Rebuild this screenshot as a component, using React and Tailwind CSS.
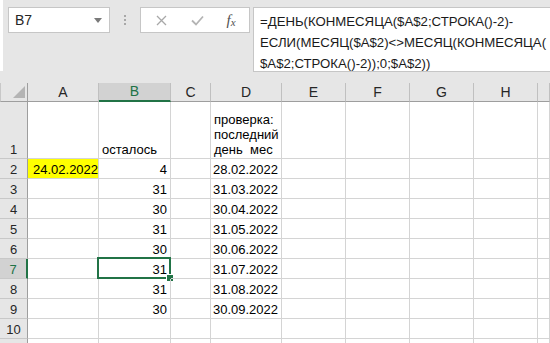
import React from "react";

const COLS = ["A", "B", "C", "D", "E", "F", "G", "H", ""];
const DATA = [
  { b: "4", d: "28.02.2022" },
  { b: "31", d: "31.03.2022" },
  { b: "30", d: "30.04.2022" },
  { b: "31", d: "31.05.2022" },
  { b: "30", d: "30.06.2022" },
  { b: "31", d: "31.07.2022" },
  { b: "31", d: "31.08.2022" },
  { b: "30", d: "30.09.2022" },
];

function Cell({ children, className = "" }) {
  return (
    <div className={`relative border-r border-b border-[#d4d4d4] flex items-end leading-[17px] ${className}`}>
      {children}
    </div>
  );
}

function RowHead({ n, selected, h = "h-[20px]" }) {
  return (
    <div
      className={`${h} flex items-end justify-center leading-[17px] border-b border-b-[#c8c8c8] ${
        selected
          ? "bg-[#d2d2d2] border-r-2 border-r-[#217346] text-[#217346]"
          : "bg-[#e6e6e6] border-r border-r-[#9e9e9e] text-[#262626]"
      }`}
    >
      {n}
    </div>
  );
}

function Row({ n, a, b, d, h = "h-[20px]", selected }) {
  return (
    <>
      <RowHead n={n} selected={selected} h={h} />
      <Cell className={`${h} px-[5px] ${a ? "bg-[#ffff00]" : ""}`}>{a}</Cell>
      <Cell className={`${h} justify-end pr-[3px]`}>
        {b}
        {selected && (
          <div className="absolute left-[-2px] top-[-2px] right-[-1px] bottom-[-1px] border-2 border-[#217346]">
            <div className="absolute right-[-4px] bottom-[-4px] w-[6px] h-[6px] bg-[#217346] outline outline-1 outline-white" />
          </div>
        )}
      </Cell>
      <Cell className={h} />
      <Cell className={`${h} justify-end pr-[3px]`}>{d}</Cell>
      <Cell className={h} />
      <Cell className={h} />
      <Cell className={h} />
      <Cell className={h} />
      <Cell className={h} />
    </>
  );
}

export default function App() {
  return (
    <div className="w-[550px] h-[343px] overflow-hidden bg-white font-['Liberation_Sans',Arial,sans-serif] text-[13px] text-black">
      {/* Formula bar */}
      <div className="h-[83px] bg-[#e6e6e6] flex items-start">
        <div className="w-[3px] h-[71px] bg-white" />
        <div className="ml-[5px] mt-[7px] w-[102px] h-[26px] bg-white border border-[#c6c6c6] flex items-center justify-between pl-[6px] pr-[7px] text-[14px] text-[#262626]">
          <span>B7</span>
          <svg width="8" height="5" viewBox="0 0 8 5">
            <path d="M0 0 L8 0 L4 5 Z" fill="#7a7a7a" />
          </svg>
        </div>
        <div className="w-[30px] h-[40px] flex flex-col items-center gap-[2px] pt-[15px]">
          <div className="w-[2px] h-[2px] bg-[#a8a8a8]" />
          <div className="w-[2px] h-[2px] bg-[#a8a8a8]" />
          <div className="w-[2px] h-[2px] bg-[#a8a8a8]" />
        </div>
        <div className="mt-[7px] w-[110px] h-[26px] bg-white border border-[#c6c6c6] flex items-center">
          <div className="w-[40px] flex justify-center">
            <svg width="11" height="11" viewBox="0 0 11 11">
              <path d="M1 1 L10 10 M10 1 L1 10" stroke="#a8a8a8" strokeWidth="1.3" />
            </svg>
          </div>
          <div className="w-[32px] flex justify-center">
            <svg width="13" height="11" viewBox="0 0 13 11">
              <path d="M1 5.5 L5 9.5 L12 1.5" stroke="#b4b4b4" strokeWidth="1.8" fill="none" />
            </svg>
          </div>
          <div className="w-[36px] flex justify-center font-['Liberation_Serif',serif] italic text-[15px] text-[#505050] leading-none">
            <span>f</span>
            <span className="text-[11px] mt-[4px]">x</span>
          </div>
        </div>
        <div className="ml-[3px] mt-[7px] flex-1 h-[65px] bg-white border-l border-t border-b border-[#c6c6c6] pl-[6px] pt-[3px] leading-[21px] text-[13.2px] text-[#1a1a1a] whitespace-nowrap">
          <div>=ДЕНЬ(КОНМЕСЯЦА($A$2;СТРОКА()-2)-</div>
          <div>ЕСЛИ(МЕСЯЦ($A$2)&lt;&gt;МЕСЯЦ(КОНМЕСЯЦА(</div>
          <div>$A$2;СТРОКА()-2));0;$A$2))</div>
        </div>
      </div>

      {/* Grid */}
      <div className="grid grid-cols-[28px_71px_72px_40px_71px_64px_64px_64px_64px_12px]">
        {/* header row */}
        <div className="h-[19px] bg-[#e6e6e6] border-r border-r-[#9e9e9e] border-b border-b-[#9e9e9e] border-l border-l-[#c8c8c8] flex items-end justify-end pr-[2px] pb-[3px]">
          <svg width="12" height="12" viewBox="0 0 12 12">
            <path d="M12 0 L12 12 L0 12 Z" fill="#b4b4b4" />
          </svg>
        </div>
        {COLS.map((c, i) =>
          c === "B" ? (
            <div
              key={i}
              className="h-[19px] bg-[#d2d2d2] border-r border-r-[#c0c0c0] border-b-2 border-b-[#217346] flex items-center justify-center text-[#217346] text-[14px]"
            >
              {c}
            </div>
          ) : (
            <div
              key={i}
              className="h-[19px] bg-[#e6e6e6] border-r border-r-[#c0c0c0] border-b border-b-[#9e9e9e] flex items-center justify-center text-[#262626] text-[14px]"
            >
              {c}
            </div>
          )
        )}

        {/* row 1 */}
        <RowHead n="1" h="h-[57px]" />
        <Cell className="h-[57px]" />
        <Cell className="h-[57px] pl-[3px]">осталось</Cell>
        <Cell className="h-[57px]" />
        <Cell className="h-[57px] pl-[3px] pb-[1px]">
          <div className="leading-[15px]">
            проверка:
            <br />
            последний
            <br />
            <span className="whitespace-pre">день  мес</span>
          </div>
        </Cell>
        <Cell className="h-[57px]" />
        <Cell className="h-[57px]" />
        <Cell className="h-[57px]" />
        <Cell className="h-[57px]" />
        <Cell className="h-[57px]" />

        {DATA.map((r, i) => (
          <Row
            key={i}
            n={String(i + 2)}
            a={i === 0 ? "24.02.2022" : ""}
            b={r.b}
            d={r.d}
            selected={i + 2 === 7}
          />
        ))}
        <Row n="10" a="" b="" d="" />
        <Row n="" a="" b="" d="" />
      </div>
    </div>
  );
}
